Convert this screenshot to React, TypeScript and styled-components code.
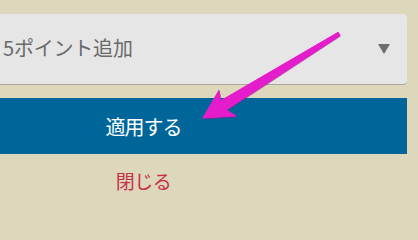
import React from "react";
import styled, { createGlobalStyle } from "styled-components";

const Global = createGlobalStyle`
  html, body { margin: 0; padding: 0; background: #ddd7bb; }
  body { width: 418px; height: 210px; overflow: hidden; position: relative;
    font-family: "Noto Sans CJK JP", "Noto Sans", sans-serif; }
`;

const Panel = styled.div`
  width: 527px;
  margin-left: -120px;
  padding-top: 14px;
  display: flex;
  flex-direction: column;
`;

const Select = styled.div`
  height: 70px;
  background: #e6e6e6;
  border-radius: 4px;
  border-bottom: 1px solid #aaa79a;
  display: flex;
  align-items: center;
  justify-content: space-between;
  padding: 0 17px 0 123px;
  box-sizing: content-box;
  font-size: 20px;
  color: #6a6a6a;
  margin-bottom: 13px;
`;

const SelectLabel = styled.span`
  line-height: 1;
  margin-top: -3px;
  letter-spacing: -0.2px;
`;

const Caret = styled.span`
  width: 0;
  height: 0;
  border-left: 6.5px solid transparent;
  border-right: 6.5px solid transparent;
  border-top: 10px solid #6e6e6e;
  margin-top: -1px;
`;

const Apply = styled.div`
  height: 56px;
  background: #006699;
  color: #ffffff;
  font-size: 20px;
  display: flex;
  align-items: center;
  justify-content: center;
  letter-spacing: -1px;
`;

const Close = styled.div`
  height: 52px;
  color: #c8304c;
  font-size: 19px;
  display: flex;
  align-items: center;
  justify-content: center;
  letter-spacing: -0.5px;
`;

const Arrow = styled.svg`
  position: absolute;
  left: 0;
  top: 0;
  pointer-events: none;
`;

export default function App() {
  return (
    <>
      <Global />
      <Panel>
        <Select>
          <SelectLabel>5ポイント追加</SelectLabel>
          <Caret />
        </Select>
        <Apply>適用する</Apply>
        <Close>閉じる</Close>
      </Panel>
      <Arrow width="418" height="210" viewBox="0 0 418 210">
        <polygon
          points="204,119.5 220,92 221.5,102 338.6,33.4 340.6,36.6 227,111 236.5,117.5"
          fill="#8a1a80"
          opacity="0.55"
        />
        <polygon
          points="203,118 219,90.5 220.5,101 338,32.4 340,35.6 226,110 236,116"
          fill="#e41ccb"
          stroke="#e41ccb"
          strokeWidth="1.2"
          strokeLinejoin="round"
        />
      </Arrow>
    </>
  );
}
